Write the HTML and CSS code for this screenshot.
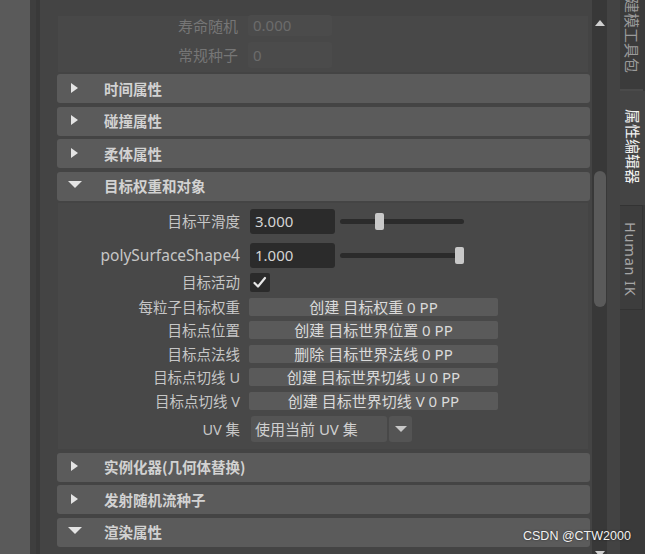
FILE: index.html
```html
<!DOCTYPE html>
<html>
<head>
<meta charset="utf-8">
<link rel="stylesheet" href="styles.css">
</head>
<body>
<div class="root">
  <div class="leftcol"></div>
  <div class="sep"></div>
  <div class="main">
    <div class="frame frame-top">
      <div class="frow frow-a"><div class="lbl dim">寿命随机</div><div class="dfield">0.000</div></div>
      <div class="frow frow-b"><div class="lbl dim">常规种子</div><div class="dfield tall">0</div></div>
    </div>
    <div class="hdr first"><div class="tri"><span class="tri-r"></span></div><span class="htxt">时间属性</span></div>
    <div class="hdr"><div class="tri"><span class="tri-r"></span></div><span class="htxt">碰撞属性</span></div>
    <div class="hdr"><div class="tri"><span class="tri-r"></span></div><span class="htxt">柔体属性</span></div>
    <div class="hdr"><div class="tri"><span class="tri-d"></span></div><span class="htxt">目标权重和对象</span></div>
    <div class="frame body">
      <div class="row r1">
        <div class="lbl">目标平滑度</div>
        <div class="ctl"><div class="field">3.000</div><div class="slider"><div class="track"></div><div class="knob" style="left:35px"></div></div></div>
      </div>
      <div class="row r2">
        <div class="lbl">polySurfaceShape4</div>
        <div class="ctl"><div class="field">1.000</div><div class="slider"><div class="track"></div><div class="knob" style="left:115px"></div></div></div>
      </div>
      <div class="row r3">
        <div class="lbl">目标活动</div>
        <div class="ctl"><div class="check"><svg width="20" height="19" viewBox="0 0 20 19"><polyline points="4.5,10 8,13.5 15,5" fill="none" stroke="#e8e8e8" stroke-width="2.2" stroke-linecap="round" stroke-linejoin="round"/></svg></div></div>
      </div>
      <div class="row rb"><div class="lbl">每粒子目标权重</div><div class="ctl"><div class="btn">创建 目标权重 0 PP</div></div></div>
      <div class="row rb"><div class="lbl">目标点位置</div><div class="ctl"><div class="btn">创建 目标世界位置 0 PP</div></div></div>
      <div class="row rb"><div class="lbl">目标点法线</div><div class="ctl"><div class="btn">删除 目标世界法线 0 PP</div></div></div>
      <div class="row rb"><div class="lbl">目标点切线 U</div><div class="ctl"><div class="btn">创建 目标世界切线 U 0 PP</div></div></div>
      <div class="row rb"><div class="lbl">目标点切线 V</div><div class="ctl"><div class="btn">创建 目标世界切线 V 0 PP</div></div></div>
      <div class="row ruv">
        <div class="lbl">UV 集</div>
        <div class="ctl"><div class="combo">使用当前 UV 集</div><div class="combo-arrow"><span class="tri-s"></span></div></div>
      </div>
    </div>
    <div class="hdr after"><div class="tri"><span class="tri-r"></span></div><span class="htxt">实例化器(几何体替换)</span></div>
    <div class="hdr"><div class="tri"><span class="tri-r"></span></div><span class="htxt">发射随机流种子</span></div>
    <div class="hdr"><div class="tri"><span class="tri-d"></span></div><span class="htxt">渲染属性</span></div>
  </div>
  <div class="scroll">
    <span class="sc-up"></span>
    <div class="thumb"></div>
    <span class="sc-down"></span>
  </div>
  <div class="gapcol"></div>
  <div class="tabs">
    <div class="tab t1"><span class="vt">建模工具包</span></div>
    <div class="tab t2"><span class="vt">属性编辑器</span></div>
    <div class="tab t3"><span class="vt lat">Human IK</span></div>
  </div>
  <div class="watermark">CSDN @CTW2000</div>
</div>
</body>
</html>
```
FILE: styles.css
```css
* { box-sizing: border-box; }
html, body { margin: 0; padding: 0; }
body {
  background: #444444;
  font-family: "Noto Sans", "Noto Sans CJK SC", sans-serif;
  color: #c8c8c8;
  overflow: hidden;
}
.root {
  position: relative;
  display: flex;
  width: 645px;
  height: 554px;
  overflow: hidden;
}
.leftcol { width: 30px; background: #5a5a5a; flex: none; }
.sep { width: 10px; background: #3e3e3e; border-right: 4px solid #393939; flex: none; }
.main {
  width: 552px;
  flex: none;
  display: flex;
  flex-direction: column;
  padding: 16px 2px 0 17px;
  background: #444444;
}
.frame {
  margin: 0 2px 0 1px;
  background: #484848;
}
.frame-top { height: 56px; padding-top: 0; }
.frow { display: flex; align-items: center; }
.frow-a { height: 21px; margin-top: -1px; }
.frow-b { height: 26px; margin-top: 6px; }
.lbl {
  width: 182px;
  flex: none;
  text-align: right;
  font-size: 14.5px;
  line-height: 18px;
  color: #c6c6c6;
  white-space: nowrap;
}
.lbl.lat { font-size: 15px; }
.lbl.dim { width: 180px; color: #767676; font-size: 15px; }
.dfield {
  margin-left: 10px;
  width: 84px;
  height: 21px;
  background: #4b4b4b;
  border-radius: 3px;
  color: #6c6c6c;
  font-size: 15px;
  line-height: 21px;
  padding-left: 5px;
}
.dfield.tall { height: 26px; line-height: 26px; }

.hdr {
  height: 29px;
  margin-top: 3.5px;
  background: #5b5b5b;
  border-radius: 3px;
  display: flex;
  align-items: center;
  flex: none;
}
.hdr.first { margin-top: 2px; }
.hdr.after { margin-top: 4px; }
.tri { width: 35px; display: flex; justify-content: center; align-items: center; flex: none; }
.tri-r {
  width: 0; height: 0;
  border-left: 7px solid #e4e4e4;
  border-top: 5.5px solid transparent;
  border-bottom: 5.5px solid transparent;
  margin-top: -2px;
}
.tri-d {
  width: 0; height: 0;
  border-top: 7px solid #e4e4e4;
  border-left: 7px solid transparent;
  border-right: 7px solid transparent;
  margin-top: -3px;
}
.htxt {
  margin-left: 12px;
  font-family: "Noto Sans CJK SC", sans-serif;
  font-size: 14.5px;
  font-weight: 700;
  color: #d2d2d2;
  line-height: 18px;
}

.body {
  margin-top: 2px;
  height: 246px;
  padding-top: 6px;
  display: flex;
  flex-direction: column;
  flex: none;
}
.row { display: flex; align-items: center; flex: none; }
.ctl { display: flex; align-items: center; margin-left: 9px; }
.r1 { height: 25px; }
.r2 { height: 25px; margin-top: 9px; }
.r2 .lbl { font-size: 15.5px; }
.r3 { height: 19px; margin-top: 5px; }
.rb { height: 18px; margin-top: 5.5px; }
.r3 + .rb { margin-top: 6px; }
.ruv { height: 26px; margin-top: 6px; }
.field {
  margin-left: 1px;
  width: 85px;
  height: 25px;
  background: #2b2b2b;
  border-radius: 3px;
  color: #d4d4d4;
  font-size: 15px;
  line-height: 25px;
  padding-left: 5px;
}
.slider { position: relative; width: 124px; height: 25px; margin-left: 5px; }
.track {
  position: absolute; left: 0; right: 0; top: 10px;
  height: 5px; background: #2b2b2b; border-radius: 3px;
}
.knob {
  position: absolute; top: 4px;
  width: 9px; height: 17px;
  background: #c8c8c8; border-radius: 2px;
}
.check {
  margin-left: 1px;
  width: 20px; height: 19px;
  background: #2b2b2b; border-radius: 2px;
}
.check svg { display: block; }
.btn {
  width: 249px;
  height: 18px;
  background: #5a5a5a;
  border-radius: 2px;
  text-align: center;
  font-size: 15px;
  line-height: 18px;
  color: #dadada;
  white-space: nowrap;
}
.combo {
  margin-left: 2px;
  width: 136px; height: 26px;
  background: #545454; border-radius: 3px;
  font-size: 15px; line-height: 26px;
  padding-left: 4px;
  color: #d0d0d0;
  white-space: nowrap;
}
.combo-arrow {
  margin-left: 2px;
  width: 23px; height: 26px;
  background: #545454; border-radius: 3px;
  display: flex; align-items: center; justify-content: center;
}
.tri-s {
  width: 0; height: 0;
  border-top: 6px solid #c8c8c8;
  border-left: 6px solid transparent;
  border-right: 6px solid transparent;
}

.scroll {
  width: 15px; flex: none;
  background: #383838;
  display: flex; flex-direction: column; align-items: center;
}
.sc-up {
  margin-top: 20px;
  width: 0; height: 0;
  border-bottom: 6px solid #d0d0d0;
  border-left: 5px solid transparent;
  border-right: 5px solid transparent;
}
.thumb {
  margin-top: 145px;
  width: 12px; height: 136px;
  background: #5a5a5a; border-radius: 6px;
}
.sc-down {
  margin-top: auto;
  margin-bottom: -3px;
  width: 0; height: 0;
  border-top: 6px solid #d0d0d0;
  border-left: 5px solid transparent;
  border-right: 5px solid transparent;
}
.gapcol { width: 13px; flex: none; background: #434343; }
.tabs {
  width: 25px; flex: none;
  background: #3a3a3a;
  display: flex; flex-direction: column;
}
.tab { display: flex; justify-content: center; overflow: hidden; flex: none; }
.t1 {
  height: 91px;
  width: 23px;
  background: #3b3b3b;
  border-bottom: 2px solid #4a4a4a;
  align-items: flex-end;
  padding-bottom: 16px;
}
.t2 {
  height: 114px;
  background: #444444;
  padding-top: 18px;
}
.t3 {
  height: 105px;
  width: 23px;
  background: #3d3d3d;
  border: 1px solid #333333;
  border-left: none;
  padding-top: 16px;
}
.vt {
  writing-mode: vertical-rl;
  text-orientation: sideways;
  font-family: "Noto Sans CJK SC", sans-serif;
  font-size: 15px;
  line-height: 18px;
  color: #9a9a9a;
  white-space: nowrap;
}
.t2 .vt { color: #f2f2f2; }
.vt.lat {
  font-family: "Noto Sans", sans-serif;
  font-size: 14.5px;
  letter-spacing: 0.8px;
  color: #a6a6a6;
}
.watermark {
  position: absolute;
  left: 523px; top: 529px;
  font-family: "Liberation Sans", Arial, sans-serif;
  font-size: 12.5px;
  color: #f2f2f2;
  text-shadow: 0 0 2px rgba(0,0,0,0.6);
  white-space: nowrap;
}
```
